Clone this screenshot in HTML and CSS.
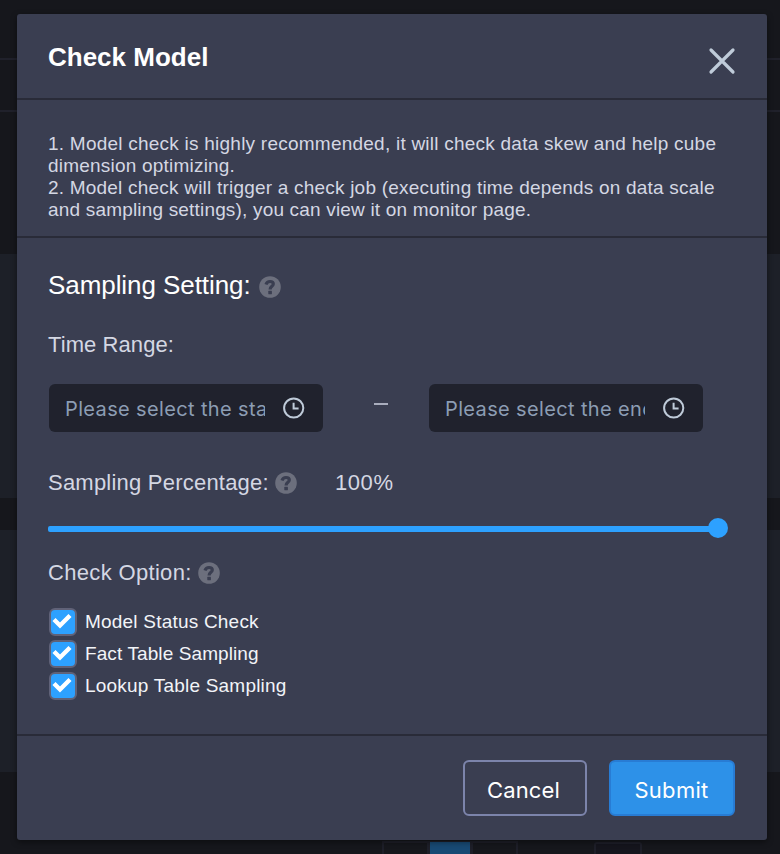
FILE: index.html
```html
<!DOCTYPE html>
<html lang="en">
<head>
<meta charset="utf-8">
<title>Check Model</title>
<link rel="stylesheet" href="styles.css">
</head>
<body>
<svg class="symbols" aria-hidden="true">
  <symbol id="help" viewBox="0 0 22 22">
    <circle cx="11" cy="11" r="10.8" fill="#6c6f7d"/>
    <path d="M7 8.4C7.7 6.3 9 5.5 11 5.5C13.2 5.5 14.3 6.6 14.3 8C14.3 10.4 11.1 10.2 11.1 13.4" fill="none" stroke="#3a3e51" stroke-width="3.2"/>
    <rect x="9.3" y="14.8" width="3.6" height="3.4" rx=".4" fill="#3a3e51"/>
  </symbol>
  <symbol id="clock" viewBox="0 0 22 22">
    <g fill="none" stroke="#bfcbd9" stroke-width="2"><circle cx="10.7" cy="11" r="9.6"/><path d="M10.6 5.8V11.4H15.6"/></g>
  </symbol>
  <symbol id="tick" viewBox="0 0 20 16">
    <path d="M2 6.5L8 12.5L18 2.5" fill="none" stroke="#fff" stroke-width="4.4"/>
  </symbol>
</svg>
<div class="backdrop">
  <div class="table-head"></div>
  <div class="panel panel-first"></div>
  <div class="panel"></div>
  <div class="pager"><span class="page"></span><span class="page current"></span><span class="page last"></span><span class="jump"></span></div>
</div>
<main class="dialog">
  <header class="head">
    <h1>Check Model</h1>
    <svg class="close" viewBox="0 0 28 28"><path d="M3 3L25 25M25 3L3 25" stroke="#bfcbd9" stroke-width="3.2" stroke-linecap="round"/></svg>
  </header>
  <section class="notes">
    <p class="n1">1. Model check is highly recommended, it will check data skew and help cube</p>
    <p class="n2">dimension optimizing.</p>
    <p class="n3">2. Model check will trigger a check job (executing time depends on data scale</p>
    <p class="n4">and sampling settings), you can view it on monitor page.</p>
  </section>
  <section class="settings">
    <h2><span>Sampling Setting:</span><svg class="help"><use href="#help"/></svg></h2>
    <div class="label time"><span>Time Range:</span></div>
    <div class="range">
      <div class="field"><span class="hint">Please select the start time</span><svg class="clock"><use href="#clock"/></svg></div>
      <span class="dash"></span>
      <div class="field"><span class="hint">Please select the end time</span><svg class="clock"><use href="#clock"/></svg></div>
    </div>
    <div class="label percent"><span>Sampling Percentage:</span><svg class="help"><use href="#help"/></svg><span class="value">100%</span></div>
    <div class="slider"><span class="knob"></span></div>
    <div class="label option"><span>Check Option:</span><svg class="help"><use href="#help"/></svg></div>
    <ul class="checks">
      <li><span class="box"><svg><use href="#tick"/></svg></span><span>Model Status Check</span></li>
      <li><span class="box"><svg><use href="#tick"/></svg></span><span class="fact">Fact Table Sampling</span></li>
      <li><span class="box"><svg><use href="#tick"/></svg></span><span>Lookup Table Sampling</span></li>
    </ul>
  </section>
  <footer class="foot">
    <button class="btn">Cancel</button>
    <button class="btn primary">Submit</button>
  </footer>
</main>
</body>
</html>
```
FILE: styles.css
```css
* { box-sizing: border-box; }
body { margin: 0; width: 780px; height: 854px; overflow: hidden; background: #16171c; font-family: "Liberation Sans", sans-serif; color: #d4d7e3; }
h1, h2, p, ul { margin: 0; padding: 0; font-weight: normal; }
svg { display: block; }
.symbols { position: absolute; width: 0; height: 0; }
.backdrop { position: absolute; inset: 0; padding-top: 58px; overflow: hidden; }
.table-head { height: 54px; border-top: 2px solid #20212b; border-bottom: 2px solid #20212b; }
.panel { height: 242px; background: #1d2028; margin-top: 32px; }
.panel-first { height: 244px; margin-top: 142px; }
.pager { display: flex; margin: 69px 0 0 382px; }
.page { width: 47px; height: 30px; border: 2px solid #1e1f29; }
.current { width: 42px; background: #184a74; border-width: 1px 1px 0; }
.last { width: 47px; }
.jump { width: 48px; height: 30px; margin: 1px 0 0 76px; border: 2px solid #1e1f29; border-radius: 3px; background: #15151d; }

.dialog { position: relative; display: flex; flex-direction: column; width: 750px; height: 826px; margin: 14px 0 0 17px; background: #3a3e51; border-radius: 3px; box-shadow: 0 2px 6px rgba(0, 0, 0, .45); overflow: visible; }
.head { display: flex; justify-content: space-between; height: 86px; padding: 28px 31.5px 0 31px; border-bottom: 2px solid #292b38; }
h1 { font-size: 26px; line-height: 30px; font-weight: bold; color: #fff; }
.close { width: 28px; height: 28px; margin-top: 4.5px; }
.notes { height: 138px; padding: 33px 31px 0; border-bottom: 2px solid #292b38; font-size: 19px; line-height: 22px; letter-spacing: .21px; white-space: nowrap; }
.n1 { letter-spacing: .235px; }
.n4 { letter-spacing: .18px; }
.settings { height: 496px; padding: 31px 31px 0; }
h2 { display: flex; align-items: center; height: 32px; font-size: 26px; line-height: 32px; letter-spacing: -.07px; color: #fff; }
.help { width: 22px; height: 22px; margin: 4px 0 0 8px; }
.label { display: flex; align-items: center; height: 28px; font-size: 22px; line-height: 28px; letter-spacing: .22px; }
.label .help { margin: 0 0 0 6px; }
.time { margin-top: 30px; letter-spacing: .08px; }
.range { display: flex; align-items: center; height: 48px; margin: 25px 0 0 1px; }
.field { display: flex; flex: none; align-items: center; justify-content: space-between; width: 274px; height: 48px; padding: 0 18px 0 16px; border-radius: 6px; background: #20222d; font-family: Inter, sans-serif; font-size: 20px; letter-spacing: .36px; color: #8c9db3; }
.hint { width: 200px; margin-top: 2px; overflow: hidden; white-space: nowrap; line-height: 28px; }
.clock { width: 22px; height: 22px; }
.dash { width: 14px; height: 2px; margin: -8px 41px 0 51px; background: #a9adbd; }
.percent { margin-top: 37px; }
.value { margin-left: 38px; letter-spacing: .6px; }
.slider { display: flex; align-items: center; justify-content: flex-end; height: 6px; width: 670px; margin-top: 29px; background: #2da1ff; border-radius: 2px 0 0 2px; }
.knob { flex: none; width: 20px; height: 20px; margin: -2px -10px 0 0; border-radius: 50%; background: #2da1ff; }
.option { margin-top: 27px; letter-spacing: .33px; }
.checks { list-style: none; margin-top: 19px; font-size: 19px; letter-spacing: .21px; color: #f2f4f8; }
.checks li { display: flex; align-items: center; height: 32px; }
.fact { letter-spacing: .1px; }
.box { display: flex; align-items: center; justify-content: center; width: 28px; height: 28px; margin: 0 8px 0 1px; border: 2px solid #606278; border-radius: 6px; background: #2da1ff; }
.box svg { width: 20px; height: 16px; margin: -3px 3px 0 0; }
.foot { display: flex; justify-content: flex-end; gap: 22px; height: 106px; padding: 24px 32px 0; border-top: 2px solid #292b38; }
.btn { width: 124px; height: 56px; padding: 3px 3px 0 0; border: 2px solid #7c84ab; border-radius: 6px; background: none; color: #fff; font-family: Inter, sans-serif; font-size: 22px; letter-spacing: .15px; }
.primary { width: 126px; padding-right: 1px; letter-spacing: .3px; border-color: #287cd4; background: #2d91e8; }
```
